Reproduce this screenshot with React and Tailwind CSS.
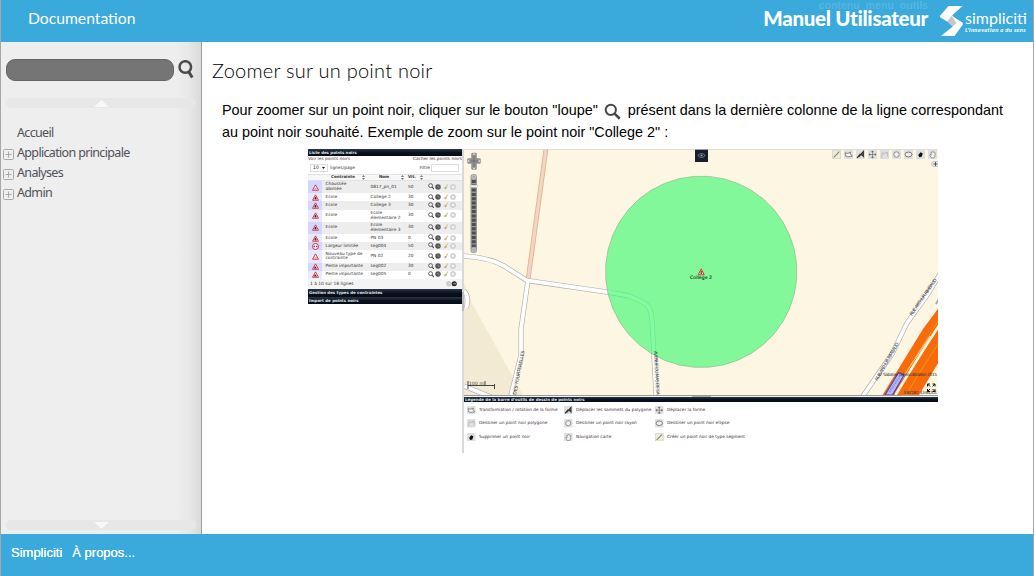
import React from "react";

const RED = "#d9252f";

function Loupe({ className, w = 3 }) {
  return (
    <svg viewBox="0 0 20 20" className={className} fill="none" stroke="#484848">
      <circle cx="8" cy="8" r="6" strokeWidth={w} />
      <path d="M12.5 12.5L18.5 18.5" strokeWidth={w + 0.6} />
    </svg>
  );
}

function Warning({ kind }) {
  if (kind === "round")
    return (
      <svg viewBox="0 0 14 14" className="h-[7px] w-[7px]">
        <circle cx="7" cy="7" r="6" fill="#fff" stroke={RED} strokeWidth="2" />
        <path d="M2.500 7l3-2v4zM11.500 7l-3-2v4z" fill="#222" />
      </svg>
    );
  return (
    <svg viewBox="0 0 14 14" className="h-[7px] w-[7px]">
      <path d="M7 1.800L13 12.500H1z" fill="#fff" stroke={RED} strokeWidth="1.800" strokeLinejoin="round" />
      {kind === "slope" ? (
        <path d="M4 11l2-5 4 5z" fill="#222" />
      ) : kind === "school" ? (
        <path d="M5 11V8l2-3 2 3v3z" fill="#333" />
      ) : (
        <path d="M4.500 10.500q1.300-3 2.500-1q1.200-2 2.500 1z" fill="#666" />
      )}
    </svg>
  );
}

function RowActions() {
  return (
    <div className="flex items-center gap-[1.3px]">
      <Loupe className="h-[6.5px] w-[6.5px]" w={2.6} />
      <svg viewBox="0 0 12 12" className="h-[6px] w-[6px]">
        <circle cx="6" cy="6" r="5.500" fill="#555" />
        <path d="M6 3v3.500h3" stroke="#bbb" fill="none" />
      </svg>
      <svg viewBox="0 0 12 12" className="h-[6px] w-[6px]">
        <path d="M1 9l4-2 1 4z" fill="#bbb" />
        <path d="M4 9l6-8" stroke="#e0c060" strokeWidth="2.200" />
        <path d="M3.500 7l4 1" stroke="#999" strokeWidth="2" />
      </svg>
      <svg viewBox="0 0 12 12" className="h-[6px] w-[6px]">
        <circle cx="6" cy="6" r="5" fill="#ddd" stroke="#c4c4c4" strokeWidth="1.500" />
        <path d="M4 4l4 4M8 4l-4 4" stroke="#fff" strokeWidth="1.200" />
      </svg>
    </div>
  );
}

const rows = [
  ["bump", "Chaussée\nabimée", "0817_pn_01", "50"],
  ["school", "Ecole", "College 2", "30"],
  ["school", "Ecole", "College 3", "30"],
  ["school", "Ecole", "Ecole\nélementaire 2", "30"],
  ["school", "Ecole", "Ecole\nélementaire 3", "30"],
  ["school", "Ecole", "PN 03", "0"],
  ["round", "Largeur limitée", "seg004", "50"],
  ["bump", "Nouveau type de\ncontrainte", "PN 02", "20"],
  ["slope", "Pente importante", "seg002", "30"],
  ["slope", "Pente importante", "seg005", "0"],
];

function Sorter() {
  return (
    <svg viewBox="0 0 6 10" className="h-[5px] w-[3px]">
      <path d="M0 4L3 0l3 4zM0 6h6L3 10z" fill="#777" />
    </svg>
  );
}

function Bar({ children, className }) {
  return (
    <div
      className={
        "flex shrink-0 items-center whitespace-nowrap bg-linear-to-b from-[#2c3748] via-[#0a1220] to-[#060b14] pl-px text-[3.95px] leading-none font-bold text-[#dfe3e8] " +
        className
      }
    >
      {children}
    </div>
  );
}

function PointsPanel() {
  return (
    <div className="flex h-[304px] w-[154px] shrink-0 flex-col bg-white text-[4.3px] leading-none text-[#333]">
      <Bar className="h-[7px]">Liste des points noirs</Bar>
      <div className="flex h-[7px] items-center justify-between whitespace-nowrap text-[4.3px] text-[#532940]">
        <span>Voir les points noirs</span>
        <span>Cacher les points noirs</span>
      </div>
      <div className="flex h-[10.5px] items-center pl-[2px] whitespace-nowrap">
        <div className="flex h-[8px] w-[18px] items-center justify-between border-[0.5px] border-[#ddd] px-[2px] text-[4.7px]">
          <span>10</span>
          <svg viewBox="0 0 6 4" className="h-[2px] w-[3px]">
            <path d="M0 0h6L3 4z" fill="#111" />
          </svg>
        </div>
        <span className="ml-[2px]">lignes/page</span>
        <span className="ml-auto">Filtre</span>
        <div className="mr-[3px] ml-[1px] h-[8px] w-[28px] border border-[#ddd] bg-white" />
      </div>
      <div className="grid h-[7.5px] grid-cols-[14px_45px_38px_20px_1fr] items-center border-y border-[#e2e2e2] bg-[#f7f7f7] text-[4px] font-bold whitespace-nowrap">
        <span />
        <span className="flex items-center justify-between pr-[2px] pl-[9px]">Contrainte<Sorter /></span>
        <span className="flex items-center justify-between pr-[1px] pl-[12px]">Nom<Sorter /></span>
        <span className="flex items-center justify-between pr-[2px] pl-[3px]">Vit.<Sorter /></span>
      </div>
      {rows.map(([kind, c, n, v], i) => {
        const tall = c.includes("\n") || n.includes("\n");
        return (
          <div
            key={i}
            className={
              "grid grid-cols-[14px_45px_38px_20px_1fr] items-center whitespace-pre leading-[4.8px] " +
              (tall ? "h-[12.2px] " : "h-[8.2px] ") +
              (i % 2 ? "bg-white" : "bg-[#ededed]")
            }
          >
            <div className={"flex h-full items-center justify-center " + (i % 2 ? "bg-[#e9e9fd]" : "bg-[#d3d6ff]")}>
              <Warning kind={kind} />
            </div>
            <span className="pl-[3.5px]">{c}</span>
            <span className="pl-[3.5px]">{n}</span>
            <span className="pl-[3px]">{v}</span>
            <div className="-mt-px pl-[2.5px]"><RowActions /></div>
          </div>
        );
      })}
      <div className="flex h-[10.5px] items-center justify-between bg-[#f4f4f4] pr-[5px] pl-[2px] text-[4.4px]">
        <span>1 à 10 sur 18 lignes</span>
        <svg viewBox="0 0 24 12" className="h-[5.5px] w-[11px]">
          <circle cx="6" cy="6" r="5" fill="#ccc" stroke="#aaa" />
          <circle cx="18" cy="6" r="5.500" fill="#222" />
          <path d="M15 6h6M18.500 3.500L21 6l-2.500 2.500M9 6H3" stroke="#fff" fill="none" />
        </svg>
      </div>
      <Bar className="h-[7.5px]">Gestion des types de contraintes</Bar>
      <Bar className="mt-[0.5px] h-[7px]">Import de points noirs</Bar>
    </div>
  );
}

const glyphs = {
  segment: <path d="M3 13L13 3" stroke="#8a8a60" strokeWidth="2" />,
  rotate: <path d="M2 5l4 1 6-2-1 3 4 4-8 1-4-1z" stroke="#666" strokeWidth="1.300" fill="#f4f4f4" />,
  vertices: <path d="M2 14L8 7M5 12l8-9v8l-3-3" stroke="#333" strokeWidth="2.300" fill="none" />,
  move: <path d="M8 2v12M2 8h12M8 1.500l-1.500 2h3zM8 14.500l-1.500-2h3zM1.500 8l2-1.500v3zM14.500 8l-2-1.500v3z" stroke="#666" strokeWidth="1.100" fill="#666" />,
  polygon: <path d="M3 14L4 5l4 1 5-2 1 8" stroke="#aaa" strokeWidth="1.300" fill="none" />,
  circle: <circle cx="8" cy="8" r="4.800" stroke="#777" strokeWidth="1.400" fill="#f0f0f0" />,
  ellipse: <ellipse cx="8" cy="8" rx="6" ry="4.300" stroke="#666" strokeWidth="1.500" fill="#f0f0f0" />,
  erase: <path d="M4 9l4-5 4 2-2 6-4 1z" fill="#111" />,
  hand: <path d="M6 14L3 9l1-1 1.500 1V4h2l1-1.500L9.500 4h2l1 1v6l-2 3z" stroke="#666" strokeWidth="1.100" fill="#f0f0f0" />,
};

function ToolIcon({ name, className }) {
  return (
    <svg viewBox="0 0 16 16" className={className}>
      <rect width="16" height="16" rx="1.500" fill={name === "segment" ? "#ecebdd" : "#dfdfdf"} />
      {name === "segment" && <rect x=".5" y=".5" width="15" height="15" rx="1.500" fill="none" stroke="#c6c5b8" />}
      {glyphs[name]}
    </svg>
  );
}

const tools = ["segment", "rotate", "vertices", "move", "polygon", "circle", "ellipse", "erase", "hand"];

const circlePoints = Array.from({ length: 40 }, (_, i) => {
  const a = ((i + 0.5) * Math.PI * 2) / 40;
  return `${(237.2 + 95.7 * Math.cos(a)).toFixed(1)},${(122.8 + 95.7 * Math.sin(a)).toFixed(1)}`;
}).join(" ");

const roads = [
  "M0 107C16 108 30 111 40 117L63 131.500L146 143.500L165 147Q180 153 184 157Q188 162 188.500 180L192 246",
  "M64 131L57 180V206L47 246",
  "M0 237L32 250",
  "M0 142Q5 146 2.500 159",
  "M480 118L464 145L443 174L428 205L399 247L390 260",
];

function RoadMap() {
  return (
    <svg viewBox="0 0 474 246" className="block h-[246px] w-[474px] font-['DejaVu_Sans',sans-serif]">
      <rect width="474" height="246" fill="#fdf6e3" />
      <path d="M0 134L10 158L59 246H0z" fill="#f3ead4" />
      <path d="M82 0L64 131" stroke="#efb27c" strokeWidth="4.800" />
      <path d="M82 0L64 131" stroke="#ecd6d2" strokeWidth="3" />
      {roads.map((d, i) => (
        <path key={i} d={d} fill="none" stroke="#a9a9a9" strokeWidth="5" />
      ))}
      {roads.map((d, i) => (
        <path key={i} d={d} fill="none" stroke="#fdfdfd" strokeWidth="3.800" />
      ))}
      <path d="M476 148L472 155" stroke="#aaa" strokeWidth="2" />
      <path d="M418.500 246L459 180L476 157V211L455 246z" fill="#f76b0c" />
      <path d="M431.500 246Q455 207 476 175" fill="none" stroke="#fdf6e3" strokeWidth="2.600" />
      <path d="M436 233Q452 208 466 187" fill="none" stroke="#fdf6e3" strokeWidth=".8" />
      <path d="M440 226L462 191L476 169M442 246L461 215L476 192" fill="none" stroke="#e9a60d" strokeWidth=".8" />
      <path d="M421 246L434.500 223.500L440 226L428.500 246z" fill="#b9b9f2" stroke="#4545bd" strokeWidth="1.200" />
      <path d="M425.500 243l11-17" stroke="#8585d6" strokeWidth="2" strokeDasharray="1 1" />

      <polygon points={circlePoints} fill="#4dfa7b" fillOpacity=".7" stroke="#8fb890" strokeWidth=".7" />

      <g fontSize="4.600" fill="#444">
        <text transform="translate(52 246) rotate(-79)" textLength="45">DES TOURTERELLES</text>
        <text transform="translate(190 202) rotate(87)" textLength="44">AVENUE DU MAS DE SA</text>
        <text transform="translate(413.500 232) rotate(-60)" textLength="43">RUE ARTHUR RIMBAUD</text>
        <text transform="translate(448 167) rotate(-55.500)" textLength="44">RUE ARTHUR RIMBAUD</text>
      </g>
      <text x="237" y="130" fontSize="4.600" fill="#153018" stroke="#153018" strokeWidth=".1" textAnchor="middle" textLength="22">College 2</text>
      <path d="M237.200 119.800l3 6h-6z" fill="#fbd8d0" stroke="#e03030" strokeWidth="1" />
      <path d="M237.200 122v3" stroke="#222" />

      <g fill="#666">
        <path d="M8.500 5h3v5.500h4v3h-4v6h-3v-6h-4v-3h4z" stroke="#8f8f8f" strokeWidth="2.500" strokeLinejoin="round" />
        <path d="M9 6l1-1.500L11 6M9 18.500l1 1.500 1-1.500M5.500 11l-1.500 1 1.500 1M14.500 11l1.500 1-1.500 1" stroke="#eee" strokeWidth=".8" fill="none" />
        <rect x="6.500" y="25" width="6.500" height="79" rx="3" fill="#999" />
        <path d="M9.800 31v67" stroke="#4e4e4e" strokeWidth="4" strokeDasharray="3 1.300" />
        <rect x="6" y="36" width="7.500" height="2.500" fill="#eee" stroke="#aaa" strokeWidth=".4" />
        <circle cx="9.800" cy="28" r="2" fill="#aaa" stroke="#ddd" strokeWidth=".6" />
        <circle cx="9.800" cy="101" r="2" fill="#aaa" stroke="#ddd" strokeWidth=".6" />
      </g>
      <rect x="231" y="0" width="13" height="13" fill="#17202d" />
      <path d="M233.800 6.500q3.700-4 7.400 0q-3.700 4-7.400 0z" stroke="#99a" strokeWidth=".7" fill="none" />
      <circle cx="237.500" cy="6.500" r="1.100" fill="#99a" />
      <rect x="467.500" y="12.500" width="8" height="5" rx="2.500" fill="#e6e8ec" stroke="#a9adb4" strokeWidth=".6" />
      <path d="M469.500 15h4M471.500 13v4" stroke="#333" strokeWidth=".8" />

      <path d="M4 232v8M4 236.500h26.500M30.500 235v5M21 232v4.500" stroke="#333" strokeWidth=".9" fill="none" />
      <text x="5" y="235.500" fontSize="4.500" fill="#444" textLength="15">100 m</text>
      <text x="414" y="226.500" fontSize="4.300" fill="#333" textLength="59">© Sabatier Géolocalisation 2015</text>
      <text x="439.500" y="245" fontSize="4.300" fill="#333" textLength="33.500">3.87187, 43.64201</text>
      <path d="M463.500 237.500v-2.500h2.500M468.500 235h2.500v2.500M463.500 240v2.500h2.500M468.500 242.500h2.500V240M463.500 235l2.500 2.500M471 235l-2.500 2.500M463.500 242.500l2.500-2.500M471 242.500l-2.500-2.500" stroke="#111" strokeWidth="1" fill="none" />
      <path d="M0 .4h474" stroke="#d5d2c8" strokeWidth=".8" />
    </svg>
  );
}

const legend = [
  ["rotate", "Transformation / rotation de la forme"],
  ["vertices", "Déplacer les sommets du polygone"],
  ["move", "Déplacer la forme"],
  ["polygon", "Dessiner un point noir polygone"],
  ["circle", "Dessiner un point noir rayon"],
  ["ellipse", "Dessiner un point noir ellipse"],
  ["erase", "Supprimer un point noir"],
  ["hand", "Navigation carte"],
  ["segment", "Créer un point noir de type segment"],
];

function Screenshot() {
  return (
    <div className="flex h-[304px] w-[630px] font-['DejaVu_Sans',sans-serif]">
      <PointsPanel />
      <div className="flex h-full w-[2px] shrink-0 items-center bg-[#d9d9d9]">
        <div className="h-[19px] w-full bg-[#bbb]" />
      </div>
      <div className="flex w-[474px] flex-col">
        <div className="relative">
          <RoadMap />
          <div className="absolute top-[1px] right-[1px] flex gap-[3px]">
            {tools.map((t) => (
              <ToolIcon key={t} name={t} className="h-[9px] w-[9px]" />
            ))}
          </div>
        </div>
        <div className="flex h-[2px] shrink-0 justify-center border-t-[0.5px] border-[#999] bg-[#f2f2f2]">
          <div className="h-full w-[19px] bg-[#aaa]" />
        </div>
        <Bar className="h-[5px] text-[3.9px]">Légende de la barre d'outils de dessin de points noirs</Bar>
        <div className="grid grid-cols-[97px_91px_1fr] grid-rows-[13.5px_13.5px_13.5px] items-center pt-[1px] pl-[3px] text-[4.27px] leading-none whitespace-nowrap text-[#3a2a38]">
          {legend.map(([icon, label]) => (
            <div key={label} className="flex items-center gap-[3.5px]">
              <ToolIcon name={icon} className="h-[8.5px] w-[8.5px]" />
              <span>{label}</span>
            </div>
          ))}
        </div>
      </div>
    </div>
  );
}

function Logo() {
  return (
    <svg viewBox="0 0 24 31" className="h-[31px] w-[24px]">
      <path d="M12 8.500L6 14.500L13 21L17.500 17.500z" fill="#c3c8ce" />
      <path d="M8.500 0H22.500L12 9.500L7 15.500L.5 11.500Q-.5 10.500 .5 9.300z" fill="#fff" />
      <path d="M11.500 9.500L22.300 16.500Q23.500 17.500 22.700 18.700L14.500 30H1L14 19.500L16.500 17z" fill="#fff" />
    </svg>
  );
}

const nav = ["Accueil", "Application principale", "Analyses", "Admin"];

export default function App() {
  return (
    <div className="flex h-[576px] w-[1034px] flex-col overflow-hidden border-x border-[#a6a6a6] bg-white font-['Liberation_Sans',Arial,sans-serif]">
      <header className="flex h-[42px] shrink-0 items-start justify-between bg-[#3aa9dc] pr-[6px] pl-[27px] text-white">
        <h2 className="mt-[7px] font-[Lato,sans-serif] text-[15.7px] leading-[23px] font-normal">Documentation</h2>
        <div className="flex items-start">
          <div className="relative mt-[6px] mr-[12px]">
            <span className="absolute top-[-6px] right-0 text-[10.6px] leading-[11px] font-bold whitespace-nowrap text-[#57b5e1]">contenu&nbsp; menu&nbsp; outils</span>
            <h1 className="relative font-[Lato,sans-serif] text-[20.5px] leading-[24px] font-black tracking-[-0.3px] whitespace-nowrap">Manuel Utilisateur</h1>
          </div>
          <div className="mt-[6px] flex">
            <Logo />
            <div className="ml-[1px] flex w-[62px] flex-col pt-[2px] whitespace-nowrap">
              <span className="font-[Lato,sans-serif] text-[16px] leading-[19px]">simpliciti</span>
              <span className="font-[Lato,sans-serif] text-[5.8px] leading-[6px] font-bold tracking-[0.35px] italic">L'innovation a du sens</span>
            </div>
          </div>
        </div>
      </header>

      <div className="flex min-h-0 flex-1">
        <aside className="flex w-[201px] shrink-0 flex-col border-r border-[#9d9d9d] bg-[linear-gradient(to_right,#eeeeee_174px,#e8e8e8_188px,#dadada_200px)] pl-[5px]">
          <div className="mt-[17px] flex items-start">
            <div className="h-[22px] w-[168px] rounded-[9px] border border-[#666] bg-[#757575]" />
            <svg viewBox="0 0 17 20" className="mt-px ml-[4px] h-[20px] w-[17px]" fill="none" stroke="#4b4b4b">
              <circle cx="7.300" cy="7" r="5.800" strokeWidth="2.500" />
              <path d="M10.800 12L14.300 17.500" strokeWidth="3" />
            </svg>
          </div>
          <div className="mt-[17px] flex h-[10px] w-[190px] items-center justify-center rounded-full bg-[#e7e7e7]">
            <svg viewBox="0 0 15 7" className="h-[7px] w-[15px]"><path d="M0 7L7.500 0L15 7z" fill="#f8f8f8" /></svg>
          </div>
          <nav className="-ml-[3px] mt-[15px] flex flex-1 flex-col">
            {nav.map((label, i) => (
              <div key={label} className="flex h-[20px] items-center">
                <div className="mt-[3px] mr-[3px] w-[11px]">
                  {i > 0 && (
                    <svg viewBox="0 0 11 11" className="h-[11px] w-[11px]" fill="none" stroke="#a9a9a9">
                      <rect x=".5" y=".5" width="10" height="10" rx="1" />
                      <path d="M2.500 5.500h6M5.500 2.500v6" />
                    </svg>
                  )}
                </div>
                <span className="font-['Noto_Sans',sans-serif] text-[12.5px] leading-[20px] tracking-[-0.66px] whitespace-nowrap text-[#50505a]">{label}</span>
              </div>
            ))}
          </nav>
          <div className="mb-[4px] flex h-[10px] w-[190px] items-center justify-center rounded-full bg-[#e7e7e7]">
            <svg viewBox="0 0 15 7" className="h-[7px] w-[15px]"><path d="M0 0H15L7.500 7z" fill="#f8f8f8" /></svg>
          </div>
        </aside>

        <main className="flex-1 pl-[10px]">
          <h2 className="mt-[14px] font-[Lato,sans-serif] text-[20px] leading-[28px] font-light tracking-[0.24px] text-black">Zoomer sur un point noir</h2>
          <div className="mt-[15px] pl-[10px] text-[14.4px] leading-[22px] text-black">
            <div className="flex h-[22px] items-center whitespace-nowrap">
              <span>Pour zoomer sur un point noir, cliquer sur le bouton "loupe"</span>
              <Loupe className="mt-[3px] mr-[7px] ml-[6px] h-[17px] w-[17px]" w={2.4} />
              <span>présent dans la dernière colonne de la ligne correspondant</span>
            </div>
            <div className="h-[22px] whitespace-nowrap">au point noir souhaité. Exemple de zoom sur le point noir "College 2" :</div>
          </div>
          <div className="mt-[6px] ml-[96px]">
            <Screenshot />
          </div>
        </main>
      </div>

      <footer className="flex h-[42px] shrink-0 gap-[10px] bg-[#3aa9dc] pt-[9px] pl-[10px] text-[13px] leading-[20px] text-white [text-shadow:0_0_0.5px_#fff]">
        <span>Simpliciti</span>
        <span>À propos...</span>
      </footer>
    </div>
  );
}
